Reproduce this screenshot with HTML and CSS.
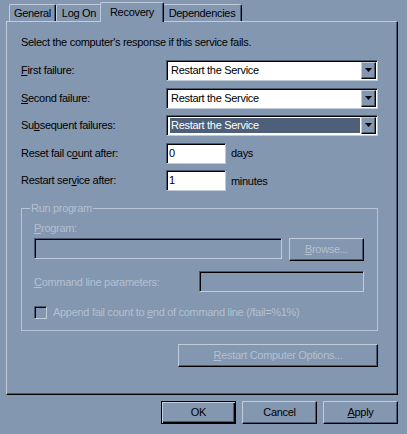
FILE: index.html
```html
<!DOCTYPE html>
<html>
<head>
<meta charset="utf-8">
<title>Service Properties - Recovery</title>
<link rel="stylesheet" href="styles.css">
</head>
<body>
<div class="dialog">
  <div class="tabs">
    <div class="tab t-general">General</div>
    <div class="tab t-logon">Log On</div>
    <div class="tab t-recovery active">Recovery</div>
    <div class="tab t-deps">Dependencies</div>
  </div>
  <div class="panel">
    <p class="intro">Select the computer's response if this service fails.</p>
    <div class="form">
      <div class="lbl"><u>F</u>irst failure:</div>
      <div class="combo"><span class="combo-text">Restart the Service</span><span class="drop"><svg width="7" height="4" viewBox="0 0 7 4"><polygon points="0,0 7,0 3.5,4" fill="#000"/></svg></span></div>
      <div class="lbl"><u>S</u>econd failure:</div>
      <div class="combo"><span class="combo-text">Restart the Service</span><span class="drop"><svg width="7" height="4" viewBox="0 0 7 4"><polygon points="0,0 7,0 3.5,4" fill="#000"/></svg></span></div>
      <div class="lbl">Su<u>b</u>sequent failures:</div>
      <div class="combo focused"><span class="combo-text">Restart the Service</span><span class="drop"><svg width="7" height="4" viewBox="0 0 7 4"><polygon points="0,0 7,0 3.5,4" fill="#000"/></svg></span></div>
      <div class="lbl">Reset fail c<u>o</u>unt after:</div>
      <div class="num-row"><span class="field num">0</span><span class="unit">days</span></div>
      <div class="lbl">Restart ser<u>v</u>ice after:</div>
      <div class="num-row"><span class="field num">1</span><span class="unit">minutes</span></div>
    </div>
    <fieldset class="group">
      <legend class="dis">Run program</legend>
      <div class="dis prog-label"><u>P</u>rogram:</div>
      <div class="prog-row"><span class="field off prog"></span><span class="btn browse dis"><u>B</u>rowse...</span></div>
      <div class="cmd-row"><span class="dis"><u>C</u>ommand line parameters:</span><span class="field off cmd"></span></div>
      <div class="chk-row"><span class="chk"></span><span class="dis">Append fail count to <u>e</u>nd of command line (/fail=%1%)</span></div>
    </fieldset>
    <div class="restart-row"><span class="btn restart dis"><u>R</u>estart Computer Options...</span></div>
  </div>
  <div class="actions">
    <span class="btn default">OK</span>
    <span class="btn">Cancel</span>
    <span class="btn"><u>A</u>pply</span>
  </div>
</div>
</body>
</html>
```
FILE: styles.css
```css
html, body {
  margin: 0;
  padding: 0;
  background: #8497b0;
}
body {
  font-family: "Liberation Sans", Arial, sans-serif;
  font-size: 11px;
  letter-spacing: -0.3px;
  color: #000;
  width: 407px;
  height: 434px;
  overflow: hidden;
}
u { text-decoration: underline; text-underline-offset: 1px; }

.dialog {
  padding: 2px 0 0 6px;
  width: 392px;
}

/* tabs */
.tabs {
  display: flex;
  align-items: flex-end;
  height: 19px;
  margin-left: 3px;
}
.tab {
  box-sizing: border-box;
  height: 17px;
  padding-top: 2px;
  line-height: 13px;
  text-align: center;
  border-top: 1px solid #c0ccda;
  border-left: 1px solid #c0ccda;
  border-right: 1px solid #000;
  box-shadow: inset -1px 0 #4b5a6e;
  border-radius: 2px 2px 0 0;
  background: #8497b0;
}
.t-general { width: 47px; }
.t-logon { width: 46px; }
.t-recovery { width: 60px; }
.t-deps { width: 80px; }
.tab.active {
  position: relative;
  z-index: 1;
  width: 64px;
  height: 20px;
  margin: 0 -2px -1px -2px;
  padding-top: 3px;
}

/* panel */
.panel {
  box-sizing: border-box;
  width: 392px;
  height: 374px;
  border: 1px solid;
  border-color: #c0ccda #000 #000 #c0ccda;
  box-shadow: inset -1px -1px #4b5a6e;
  padding: 14px 19px 0 14px;
}
.intro {
  margin: 0 0 11px 0;
  line-height: 13px;
}

.form {
  display: grid;
  grid-template-columns: 145px 212px;
  grid-auto-rows: 21px;
  row-gap: 6.5px;
}
.lbl {
  line-height: 21px;
}

/* sunken field */
.field, .combo, .chk {
  box-sizing: border-box;
  border: 1px solid;
  border-color: #4b5a6e #c0ccda #c0ccda #4b5a6e;
  box-shadow: inset 1px 1px #000;
  background: #fff;
}
.combo {
  height: 21px;
  display: flex;
  padding: 1px;
}
.combo-text {
  flex: 1;
  line-height: 17px;
  padding-left: 2px;
  margin-left: 1px;
  white-space: nowrap;
}
.combo.focused .combo-text {
  background: #4e6079;
  color: #fff;
  margin: 1px 1px 1px 2px;
  line-height: 15px;
  padding-left: 1px;
}
.drop {
  box-sizing: border-box;
  width: 15px;
  height: 17px;
  border: 1px solid;
  border-color: #c0ccda #000 #000 #c0ccda;
  box-shadow: inset -1px -1px #4b5a6e;
  background: #8497b0;
  display: flex;
  align-items: center;
  justify-content: center;
  padding-bottom: 1px;
}

.num-row {
  display: flex;
  align-items: center;
  gap: 5px;
}
.field.num {
  width: 60px;
  height: 21px;
  line-height: 19px;
  padding-left: 2px;
}

/* group */
.group {
  margin: 11px 0 0 0;
  padding: 7px 13px 11px 12px;
  border: 1px solid #b9c5d4;
  min-width: 0;
}
.group legend {
  line-height: 13px;
  padding: 0 1px;
  margin-left: -4px;
}
.dis {
  color: #b3c0cf;
}
.prog-label {
  line-height: 13px;
}
.prog-row {
  display: flex;
  gap: 7px;
  margin-top: 3px;
  height: 21px;
}
.field.off {
  background: #8497b0;
}
.field.prog {
  flex: 1;
  height: 21px;
}
.cmd-row {
  display: flex;
  justify-content: space-between;
  align-items: center;
  margin-top: 12px;
  height: 21px;
}
.field.cmd {
  width: 165px;
  height: 21px;
}
.chk-row {
  display: flex;
  align-items: center;
  gap: 6px;
  margin-top: 14px;
  height: 13px;
  line-height: 13px;
}
.chk {
  width: 13px;
  height: 13px;
  background: #8497b0;
}

/* buttons */
.btn {
  box-sizing: border-box;
  display: block;
  width: 75px;
  height: 23px;
  line-height: 21px;
  text-align: center;
  border: 1px solid;
  border-color: #c0ccda #000 #000 #c0ccda;
  box-shadow: inset -1px -1px #4b5a6e;
  background: #8497b0;
}
.btn.default {
  border-color: #000;
  box-shadow: inset 1px 1px #c0ccda, inset -1px -1px #000, inset -2px -2px #4b5a6e;
}
.restart-row {
  display: flex;
  justify-content: flex-end;
  margin-top: 13px;
}
.btn.restart { width: 200px; }

.actions {
  display: flex;
  justify-content: flex-end;
  gap: 6px;
  margin-top: 6px;
}
```
